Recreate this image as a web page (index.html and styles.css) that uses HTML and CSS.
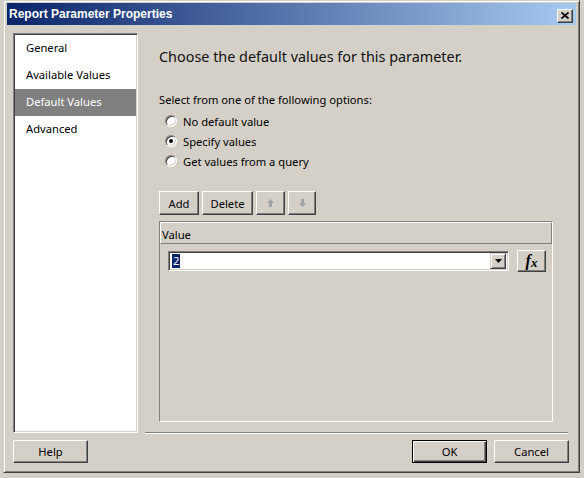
FILE: index.html
```html
<!DOCTYPE html>
<html>
<head>
<meta charset="utf-8">
<title>Report Parameter Properties</title>
<link rel="stylesheet" href="styles.css">
</head>
<body>
<div class="window">
  <div class="titlebar">
    <span class="title">Report Parameter Properties</span>
    <span class="close-btn"><svg width="8" height="7" viewBox="0 0 8 7"><path d="M0.5 0.5 L7.5 6.5 M7.5 0.5 L0.5 6.5" stroke="#000" stroke-width="1.7" fill="none"/></svg></span>
  </div>
  <div class="client">
    <div class="top">
      <nav class="nav">
        <div class="nav-item">General</div>
        <div class="nav-item">Available Values</div>
        <div class="nav-item active">Default Values</div>
        <div class="nav-item">Advanced</div>
      </nav>
      <div class="main">
        <div class="heading">Choose the default values for this parameter.</div>
        <div class="prompt">Select from one of the following options:</div>
        <div class="radios">
          <div class="radio"><span class="radio-box"></span><span>No default value</span></div>
          <div class="radio"><span class="radio-box checked"></span><span>Specify values</span></div>
          <div class="radio"><span class="radio-box"></span><span>Get values from a query</span></div>
        </div>
        <div class="toolbar">
          <div class="btn btn-add">Add</div>
          <div class="btn btn-delete">Delete</div>
          <div class="btn btn-arrow"><svg width="7" height="8" viewBox="0 0 7 8"><path d="M3.5 0 L7 4 H5 V8 H2 V4 H0 Z" fill="#a3a3a3"/></svg></div>
          <div class="btn btn-arrow"><svg width="7" height="8" viewBox="0 0 7 8"><path d="M3.5 8 L7 4 H5 V0 H2 V4 H0 Z" fill="#a3a3a3"/></svg></div>
        </div>
        <div class="grid">
          <div class="grid-header">Value</div>
          <div class="grid-row">
            <div class="combo">
              <span class="combo-text"><span class="sel">2</span></span>
              <span class="combo-btn"><svg width="7" height="4" viewBox="0 0 7 4"><path d="M0 0 H7 L3.5 4 Z" fill="#000"/></svg></span>
            </div>
            <div class="btn fx-btn"><span class="fx-f">f</span><span class="fx-x">x</span></div>
          </div>
        </div>
      </div>
    </div>
    <div class="bottom">
      <div class="btn dlg-btn">Help</div>
      <div class="spacer"></div>
      <div class="btn dlg-btn default">OK</div>
      <div class="btn dlg-btn">Cancel</div>
    </div>
  </div>
</div>
</body>
</html>
```

FILE: styles.css
```css
* { box-sizing: border-box; }

html, body {
  margin: 0;
  padding: 0;
}

body {
  background: #d4d0c8;
  width: 584px;
  height: 478px;
  overflow: hidden;
  font-family: "Noto Sans", sans-serif;
  font-size: 11.2px;
  color: #000;
}

.window {
  margin-left: 3px;
  width: 577px;
  height: 473px;
  background: #d4d0c8;
  border: 1px solid;
  border-color: #d4d0c8 #404040 #404040 #d4d0c8;
  box-shadow: inset 1px 1px #ffffff, inset -1px -1px #808080;
  padding: 2px 3px 3px 3px;
  display: flex;
  flex-direction: column;
}

.titlebar {
  height: 22px;
  flex: none;
  background: linear-gradient(to right, #0a246a, #a6caf0);
  display: flex;
  align-items: flex-start;
  justify-content: space-between;
  padding: 0 3px 0 2px;
}

.title {
  font-family: "Liberation Sans", Arial, sans-serif;
  font-weight: bold;
  font-size: 12px;
  line-height: 22px;
  color: #fff;
}

.close-btn {
  margin-top: 6px;
  width: 16px;
  height: 14px;
  background: #d4d0c8;
  border: 1px solid;
  border-color: #fff #404040 #404040 #fff;
  box-shadow: inset -1px -1px #808080;
  display: flex;
  align-items: center;
  justify-content: center;
  padding-bottom: 1px;
}

.client {
  flex: 1;
  display: flex;
  flex-direction: column;
}

.top {
  display: flex;
  padding: 8px 0 0 6px;
}

.nav {
  width: 125px;
  height: 400px;
  background: #fff;
  border: 1px solid;
  border-color: #808080 #fff #fff #808080;
  box-shadow: inset 1px 1px #404040, inset -1px -1px #d4d0c8;
  padding: 1px;
}

.nav-item {
  height: 27px;
  line-height: 26px;
  padding-left: 11px;
  color: #000;
}

.nav-item.active {
  background: #808080;
  color: #fff;
}

.main {
  margin-left: 7px;
  width: 423px;
  height: 400px;
  border-bottom: 1px solid #808080;
  box-shadow: 0 1px #fff;
  padding: 14px 15px 0 14px;
  display: flex;
  flex-direction: column;
}

.heading {
  font-size: 14.4px;
  line-height: 20px;
  height: 20px;
  color: #101010;
}

.prompt {
  margin-top: 25px;
  line-height: 16px;
  height: 16px;
}

.radios {
  margin-top: 3px;
  display: flex;
  flex-direction: column;
}

.radio {
  height: 20px;
  display: flex;
  align-items: center;
  padding-left: 6px;
  gap: 6px;
}

.radio-box {
  width: 12px;
  height: 12px;
  border-radius: 50%;
  background: #fff;
  border: 1px solid;
  border-color: #808080 #fff #fff #808080;
  box-shadow: inset 1px 1px #404040, inset -1px -1px #d4d0c8;
  display: flex;
  align-items: center;
  justify-content: center;
}

.radio-box.checked::after {
  content: "";
  width: 4px;
  height: 4px;
  border-radius: 50%;
  background: #000;
}

.toolbar {
  margin-top: 20px;
  display: flex;
  gap: 3px;
}

.btn {
  height: 24px;
  background: #d4d0c8;
  border: 1px solid;
  border-color: #fff #404040 #404040 #fff;
  box-shadow: inset -1px -1px #808080;
  display: flex;
  align-items: center;
  justify-content: center;
  color: #000;
}

.btn-add { width: 40px; }
.btn-delete { width: 51px; }
.btn-arrow { width: 29px; }
.btn-arrow:last-child { width: 28px; }

.grid {
  margin-top: 6px;
  height: 201px;
  border: 1px solid;
  border-color: #808080 #fff #fff #808080;
  display: flex;
  flex-direction: column;
}

.grid-header {
  height: 22px;
  line-height: 23px;
  padding-left: 1px;
  border: 1px solid;
  border-color: #fff #808080 #808080 #fff;
}

.grid-row {
  margin-top: 6px;
  padding-left: 8px;
  display: flex;
  align-items: center;
  gap: 8px;
}

.combo {
  width: 341px;
  height: 20px;
  background: #fff;
  border: 1px solid;
  border-color: #808080 #fff #fff #808080;
  box-shadow: inset 1px 1px #404040, inset -1px -1px #d4d0c8;
  padding: 2px;
  display: flex;
  align-items: center;
}

.combo-text {
  flex: 1;
  padding-left: 1px;
  display: flex;
  align-items: center;
}

.sel {
  background: #0a246a;
  color: #fff;
  line-height: 14px;
  padding: 0 1px;
}

.combo-btn {
  width: 16px;
  height: 16px;
  background: #d4d0c8;
  border: 1px solid;
  border-color: #d4d0c8 #404040 #404040 #d4d0c8;
  box-shadow: inset 1px 1px #fff, inset -1px -1px #808080;
  display: flex;
  align-items: center;
  justify-content: center;
}

.fx-btn {
  width: 29px;
  height: 22px;
  font-family: "Liberation Serif", serif;
  font-style: italic;
  font-weight: bold;
  align-items: baseline;
  padding-top: 1px;
}

.fx-f {
  font-size: 16px;
}

.fx-x {
  font-size: 13px;
  position: relative;
  top: 1px;
}

.bottom {
  display: flex;
  padding: 7px 7px 0 6px;
  gap: 7px;
}

.spacer { flex: 1; }

.dlg-btn {
  width: 75px;
  height: 23px;
}

.dlg-btn.default {
  border: 1px solid #000;
  box-shadow: inset 1px 1px #fff, inset -1px -1px #404040, inset -2px -2px #808080;
}
```
